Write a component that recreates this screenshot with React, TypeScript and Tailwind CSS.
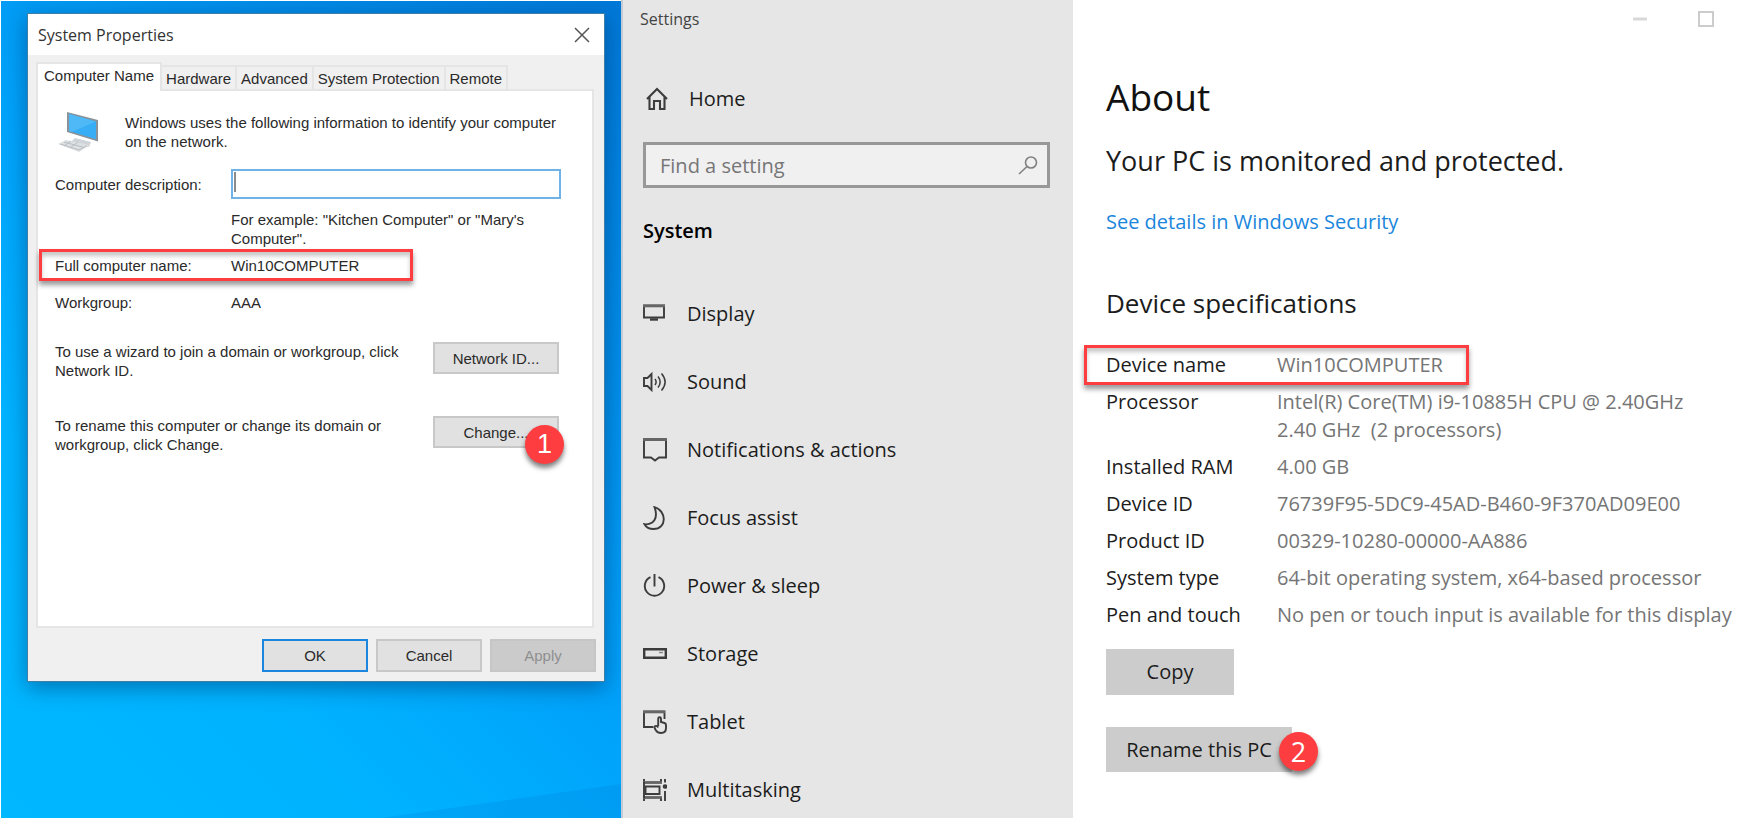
import { useState } from "react";
import type { ReactNode } from "react";

const tabs = ["Computer Name", "Hardware", "Advanced", "System Protection", "Remote"];

const specs: { label: string; value: ReactNode; marked?: boolean }[] = [
  { label: "Device name", value: "Win10COMPUTER", marked: true },
  {
    label: "Processor",
    value: (
      <>
        Intel(R) Core(TM) i9-10885H CPU @ 2.40GHz
        <br />
        2.40 GHz&nbsp; (2 processors)
      </>
    ),
  },
  { label: "Installed RAM", value: "4.00 GB" },
  { label: "Device ID", value: "76739F95-5DC9-45AD-B460-9F370AD09E00" },
  { label: "Product ID", value: "00329-10280-00000-AA886" },
  { label: "System type", value: "64-bit operating system, x64-based processor" },
  { label: "Pen and touch", value: "No pen or touch input is available for this display" },
];

function Icon({ children }: { children: ReactNode }) {
  return (
    <svg
      aria-hidden="true"
      viewBox="0 0 24 24"
      className="size-6 shrink-0"
      fill="none"
      stroke="#3c3c3c"
      strokeWidth="1.9"
    >
      {children}
    </svg>
  );
}

const navItems: { label: string; icon: ReactNode }[] = [
  {
    label: "Display",
    icon: (
      <>
        <path d="M1 3.5h20v12H1z" />
        <path d="M0 4h22" strokeWidth="2.6" stroke="#666" />
        <path d="M7 17.5h8" strokeWidth="2.4" />
      </>
    ),
  },
  {
    label: "Sound",
    icon: (
      <>
        <path d="M1 8h3.5L8.500 4v16l-4-4H1z" />
        <path d="M12 9c1.500 2 1.500 4 0 6M15 6.500c2.800 3.600 2.800 7.400 0 11M18.500 3.500c4.600 5.400 4.600 11.600 0 17" strokeWidth="1.5" />
      </>
    ),
  },
  {
    label: "Notifications & actions",
    icon: (
      <>
        <path d="M1 1v18.500h7l4 3 4-3h7V1" />
        <path d="M0 1.500h24" strokeWidth="3" stroke="#666" />
      </>
    ),
  },
  {
    label: "Focus assist",
    icon: <path d="M11.500 1.200c12.500 3.500 12.500 21.800-1 21.800-4.500 0-7.500-2-9-4.800 3 .6 8-.7 10-4.200 2.500-4.500 1.500-9 0-12.800z" />,
  },
  {
    label: "Power & sleep",
    icon: <path d="M11.500 0v12.500M7.500 3.200a9.700 9.700 0 1 0 8 0" />,
  },
  {
    label: "Storage",
    icon: (
      <>
        <path d="M1.200 7.200h21.600v8.600H1.200z" strokeWidth="2.400" />
        <path d="M16 10.500h4" strokeWidth="1.500" stroke="#888" />
      </>
    ),
  },
  {
    label: "Tablet",
    icon: (
      <>
        <path d="M10 17H1V1.500h20.500V9" />
        <path d="M0 2h22" strokeWidth="2.600" stroke="#666" />
        <path d="M15.200 16V8.800c0-2 2.800-2 2.800 0V12l3.500 1c1.200.4 1.500 1 1.500 2v3c0 3-2 5-5 5s-4-1-5.200-2.800L11.200 17c.9-1.600 2.700-1.500 4 .5" />
      </>
    ),
  },
  {
    label: "Multitasking",
    icon: (
      <>
        <path d="M1 1v3.500h17V1M1 23v-3.500h17V23M2.500 8.500h14v7.500h-14z" />
        <path d="M0 4.500h19M0 19.500h19" strokeWidth="2.600" stroke="#666" />
        <path d="M1 4v16" />
        <path d="M22 1v3.500M22 13v10" />
        <circle cx="22" cy="8.500" r="1.400" fill="#3c3c3c" stroke="#3c3c3c" />
      </>
    ),
  },
];

function StepBadge({ step, className }: { step: number; className: string }) {
  return (
    <span
      className={`absolute flex size-[39px] items-center justify-center rounded-full bg-[#fd3d3f] text-white shadow-[0_4px_5px_rgba(0,0,0,0.5)] ${className}`}
    >
      {step}
    </span>
  );
}

function ComputerIcon() {
  return (
    <svg aria-hidden="true" viewBox="0 0 42 42" className="size-[42px]">
      <path d="M18 27l16 4-2 5-18-5z" fill="#cfd4d8" />
      <path d="M1 33l8-4 24 5-11 7z" fill="#dde0e2" />
      <path d="M3 33l19 6 8-4.500M7 31l20 5.500M14 30l-7 5M21 31l-8 6" stroke="#b9bec3" strokeWidth="1" fill="none" />
      <path d="M10 1l31 8v21.500L10 21z" fill="#8a9299" />
      <path d="M12 3l27 7.500v17.700L12 20z" fill="#36adf5" />
      <path d="M12 3l27 7.500L15 20.800 12 20z" fill="#4fb9f8" />
    </svg>
  );
}

function DialogButton({
  children,
  variant = "plain",
}: {
  children: ReactNode;
  variant?: "plain" | "primary" | "disabled";
}) {
  const looks = {
    plain: "border-[#c8c8c8] bg-[#e1e1e1] text-[#2a2a2a]",
    primary: "border-[#1c86de] bg-[#e1e1e1] text-[#2a2a2a]",
    disabled: "border-[#c6c6c6] bg-[#cbcbcb] text-[#8f8f8f]",
  };
  return (
    <button
      type="button"
      disabled={variant === "disabled"}
      className={`h-[33px] w-[106px] border-2 ${looks[variant]}`}
    >
      {children}
    </button>
  );
}

function SystemProperties() {
  const [tab, setTab] = useState(tabs[0]);
  const [description, setDescription] = useState("");
  return (
    <section
      aria-label="System Properties"
      className="relative border border-[#3f7fa5] bg-[#f0f0f0] text-[15px] leading-[19px] text-[#2a2a2a] shadow-[0_6px_20px_rgba(0,40,90,0.45)]"
    >
      <header className="flex h-[41px] items-center justify-between bg-white pr-3.5 pl-2.5">
        <h1 className="font-['Open_Sans','Noto_Sans',sans-serif] text-base text-[#333]">System Properties</h1>
        <button type="button" aria-label="Close" className="flex size-4 items-center justify-center">
          <svg aria-hidden="true" viewBox="0 0 16 16" className="size-4" stroke="#555" strokeWidth="1.500">
            <path d="M1 1l14 14M15 1L1 15" />
          </svg>
        </button>
      </header>

      <div className="pt-[7px] pr-2.5 pl-2">
        <div role="tablist" className="flex items-end">
          {tabs.map((name) => (
            <button
              key={name}
              type="button"
              role="tab"
              aria-selected={tab === name}
              onClick={() => setTab(name)}
              className={
                tab === name
                  ? "z-10 -mb-0.5 h-[29px] border-2 border-b-0 border-[#e5e5e5] bg-white px-1.5 pb-1"
                  : "h-6 border-2 border-b-0 border-l-0 border-[#e5e5e5] px-1"
              }
            >
              {name}
            </button>
          ))}
        </div>

        <div role="tabpanel" className="border-2 border-[#e5e5e5] bg-white px-[17px] pt-[22px] pb-[172px]">
          <div className="flex gap-[26px] pl-0.5">
            <div className="-my-0.5 shrink-0">
              <ComputerIcon />
            </div>
            <p>
              Windows uses the following information to identify your computer
              <br />
              on the network.
            </p>
          </div>

          <div className="mt-[18px] flex items-center pr-[14px]">
            <label htmlFor="description" className="w-44 shrink-0">
              Computer description:
            </label>
            <input
              id="description"
              value={description}
              placeholder=" "
              onChange={(event) => setDescription(event.target.value)}
              className="h-[30px] min-w-0 flex-1 border-2 border-[#6fb2e8] bg-white bg-[length:2px_20px] bg-[position:1px_1px] bg-no-repeat px-1 outline-none placeholder-shown:bg-[linear-gradient(#8c8c8c,#8c8c8c)]"
            />
          </div>
          <p className="mt-[11px] pl-44">
            For example: "Kitchen Computer" or "Mary's
            <br />
            Computer".
          </p>

          <dl>
            <div className="mt-px -ml-4 flex h-8 w-[374px] items-center border-[3px] border-[#fd3d3f] pl-[13px] shadow-[0_4px_5px_rgba(0,0,0,0.4),inset_0_4px_4px_rgba(0,0,0,0.22)]">
              <dt className="w-44 shrink-0">Full computer name:</dt>
              <dd>Win10COMPUTER</dd>
            </div>
            <div className="mt-3 flex">
              <dt className="w-44 shrink-0">Workgroup:</dt>
              <dd>AAA</dd>
            </div>
          </dl>

          <div className="mt-[30px] flex items-start justify-between pr-4">
            <p>
              To use a wizard to join a domain or workgroup, click
              <br />
              Network ID.
            </p>
            <button type="button" className="h-8 w-[126px] shrink-0 border-2 border-[#c8c8c8] bg-[#e1e1e1]">
              Network ID...
            </button>
          </div>

          <div className="mt-9 flex items-start justify-between pr-4">
            <p>
              To rename this computer or change its domain or
              <br />
              workgroup, click Change.
            </p>
            <div className="relative shrink-0">
              <button type="button" className="h-8 w-[126px] border-2 border-[#c8c8c8] bg-[#e1e1e1]">
                Change...
              </button>
              <StepBadge step={1} className="top-[9px] -right-[5px] text-[27px]" />
            </div>
          </div>
        </div>
      </div>

      <footer className="flex justify-end gap-2 px-2 pt-[11px] pb-[9px]">
        <DialogButton variant="primary">OK</DialogButton>
        <DialogButton>Cancel</DialogButton>
        <DialogButton variant="disabled">Apply</DialogButton>
      </footer>
    </section>
  );
}

function SettingsNav() {
  return (
    <aside className="border-l-2 border-[#c3ccd6] bg-[#e6e6e6] pr-[23px] pl-5 text-[20px] leading-7 text-[#1c1c1c]">
      <p className="-ml-[3px] pt-[7px] text-base leading-6 text-[#444]">Settings</p>
      <a href="#home" className="mt-[54px] flex items-center gap-5 px-0.5">
        <Icon>
          <path d="M2 12L12 2l10 10M4.500 10v12H9v-8h6v8h4.500V10" strokeWidth="2.100" />
        </Icon>
        Home
      </a>
      <div className="relative mt-[29px]">
        <input
          type="search"
          aria-label="Find a setting"
          placeholder="Find a setting"
          className="h-[46px] w-full border-[3px] border-[#989898] bg-[#f0f0f0] pr-12 pl-[14px] outline-none placeholder:text-[#767676]"
        />
        <svg
          aria-hidden="true"
          viewBox="0 0 20 20"
          className="absolute top-3.5 right-3 size-5"
          fill="none"
          stroke="#808080"
          strokeWidth="1.600"
        >
          <circle cx="13" cy="6.500" r="5.500" />
          <path d="M9 10.500L1 18" />
        </svg>
      </div>
      <h2 className="mt-[29px] font-semibold text-black">System</h2>
      <nav className="mt-[47px] flex flex-col gap-6">
        {navItems.map((item) => (
          <a key={item.label} href={`#${item.label.split(" ")[0].toLowerCase()}`} className="flex h-11 items-center gap-5">
            <Icon>{item.icon}</Icon>
            {item.label}
          </a>
        ))}
      </nav>
    </aside>
  );
}

function About() {
  return (
    <main className="bg-white pl-[33px] text-[20px] leading-7 text-[#1c1c1c]">
      <header className="flex h-[38px] items-center justify-end gap-[50px] pr-[37px]">
        <button type="button" aria-label="Minimize" className="flex size-4 items-center justify-center">
          <svg aria-hidden="true" viewBox="0 0 16 16" className="size-4" stroke="#d9d9d9" strokeWidth="3">
            <path d="M1 8h14" />
          </svg>
        </button>
        <button type="button" aria-label="Maximize" className="flex size-4 items-center justify-center">
          <svg aria-hidden="true" viewBox="0 0 16 16" className="size-4" fill="none" stroke="#cccccc" strokeWidth="2">
            <path d="M1 1h14v14H1z" />
          </svg>
        </button>
      </header>
      <h1 className="mt-[35px] text-[37px] leading-[48px] text-[#111]">About</h1>
      <p className="mt-[22px] text-[27px] leading-9">Your PC is monitored and protected.</p>
      <p className="mt-[29px]">
        <a href="#security" className="text-[#1a86dc]">
          See details in Windows Security
        </a>
      </p>
      <h2 className="mt-[49px] text-[26px] leading-9">Device specifications</h2>
      <dl className="mt-[30px] flex flex-col gap-[9px]">
        {specs.map((row) => (
          <div
            key={row.label}
            className={
              row.marked
                ? "-my-1.5 -ml-[22px] flex w-[385px] border-[3px] border-[#fd3d3f] py-[3px] pl-[19px] shadow-[0_4px_5px_rgba(0,0,0,0.4),inset_0_4px_4px_rgba(0,0,0,0.22)]"
                : "flex"
            }
          >
            <dt className="w-[171px] shrink-0">{row.label}</dt>
            <dd className="whitespace-nowrap text-[#757575]">{row.value}</dd>
          </div>
        ))}
      </dl>
      <button type="button" className="mt-5 block h-[46px] w-32 bg-[#cccccc]">
        Copy
      </button>
      <div className="relative mt-8 w-fit">
        <button type="button" className="h-[45px] w-[186px] bg-[#cccccc]">
          Rename this PC
        </button>
        <StepBadge step={2} className="top-[5px] -right-[26px] text-[27px]" />
      </div>
    </main>
  );
}

export default function App() {
  return (
    <div className="grid min-h-screen grid-cols-[621fr_452fr_678fr] bg-white font-['Open_Sans','Noto_Sans',sans-serif]">
      <div className="relative overflow-hidden border-t border-l border-white bg-[linear-gradient(45deg,#00b8ff_0%,#00b2ff_28%,#00a2fa_50%,#0078d7_100%)] pt-3 pr-4 pl-[26px] font-['Liberation_Sans',Arial,sans-serif]">
        <svg
          aria-hidden="true"
          viewBox="0 0 240 34"
          preserveAspectRatio="none"
          className="absolute right-0 bottom-0 h-[34px] w-[240px]"
        >
          <path d="M0 34L240 0v34z" fill="#0078d7" opacity="0.2" />
        </svg>
        <SystemProperties />
      </div>
      <SettingsNav />
      <About />
    </div>
  );
}
